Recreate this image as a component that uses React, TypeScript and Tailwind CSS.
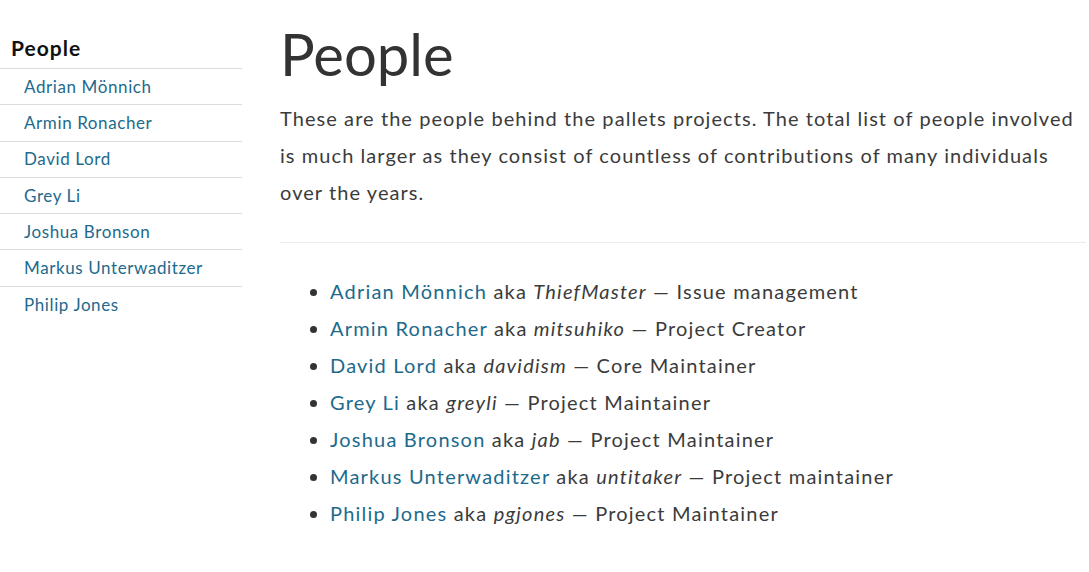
import React from 'react';

interface Person {
  name: string;
  nick: string;
  role: string;
}

const PEOPLE: Person[] = [
  { name: 'Adrian Mönnich', nick: 'ThiefMaster', role: 'Issue management' },
  { name: 'Armin Ronacher', nick: 'mitsuhiko', role: 'Project Creator' },
  { name: 'David Lord', nick: 'davidism', role: 'Core Maintainer' },
  { name: 'Grey Li', nick: 'greyli', role: 'Project Maintainer' },
  { name: 'Joshua Bronson', nick: 'jab', role: 'Project Maintainer' },
  { name: 'Markus Unterwaditzer', nick: 'untitaker', role: 'Project maintainer' },
  { name: 'Philip Jones', nick: 'pgjones', role: 'Project Maintainer' },
];

const App: React.FC = () => {
  return (
    <div className="flex min-h-[572px] bg-white font-['Lato','Open_Sans',sans-serif] text-[#3b3b3b]">
      {/* Sidebar */}
      <aside className="w-[242px] shrink-0 pt-[36px]">
        <h2 className="pl-[11px] pb-[8px] text-[21px] leading-[24px] font-bold tracking-[1px] text-[#111]">People</h2>
        <ul>
          {PEOPLE.map(p => (
            <li key={p.name} className="border-t border-[#dcdcdc] h-[36.3px] flex items-center pl-[24px]">
              <a href="#" className="text-[17px] tracking-[0.6px] text-[#1d6a8c]">{p.name}</a>
            </li>
          ))}
        </ul>
      </aside>

      {/* Content */}
      <main className="ml-[38px] w-[806px] pt-[19px]">
        <h1 className="text-[58px] leading-[70px] font-normal text-[#333]">People</h1>
        <p className="mt-[11px] text-[20px] leading-[37px] tracking-[1.07px]">
          These are the people behind the pallets projects. The total list of people involved
          is much larger as they consist of countless of contributions of many individuals
          over the years.
        </p>
        <hr className="mt-[31px] border-t border-[#ececec]" />
        <ul className="mt-[30px] list-disc pl-[50px] text-[20px] leading-[37px] tracking-[1.2px] marker:text-[#333]">
          {PEOPLE.map(p => (
            <li key={p.name}>
              <a href="#" className="text-[#1d6a8c]">{p.name}</a> aka <em>{p.nick}</em> — {p.role}
            </li>
          ))}
        </ul>
      </main>
    </div>
  );
};

export default App;
